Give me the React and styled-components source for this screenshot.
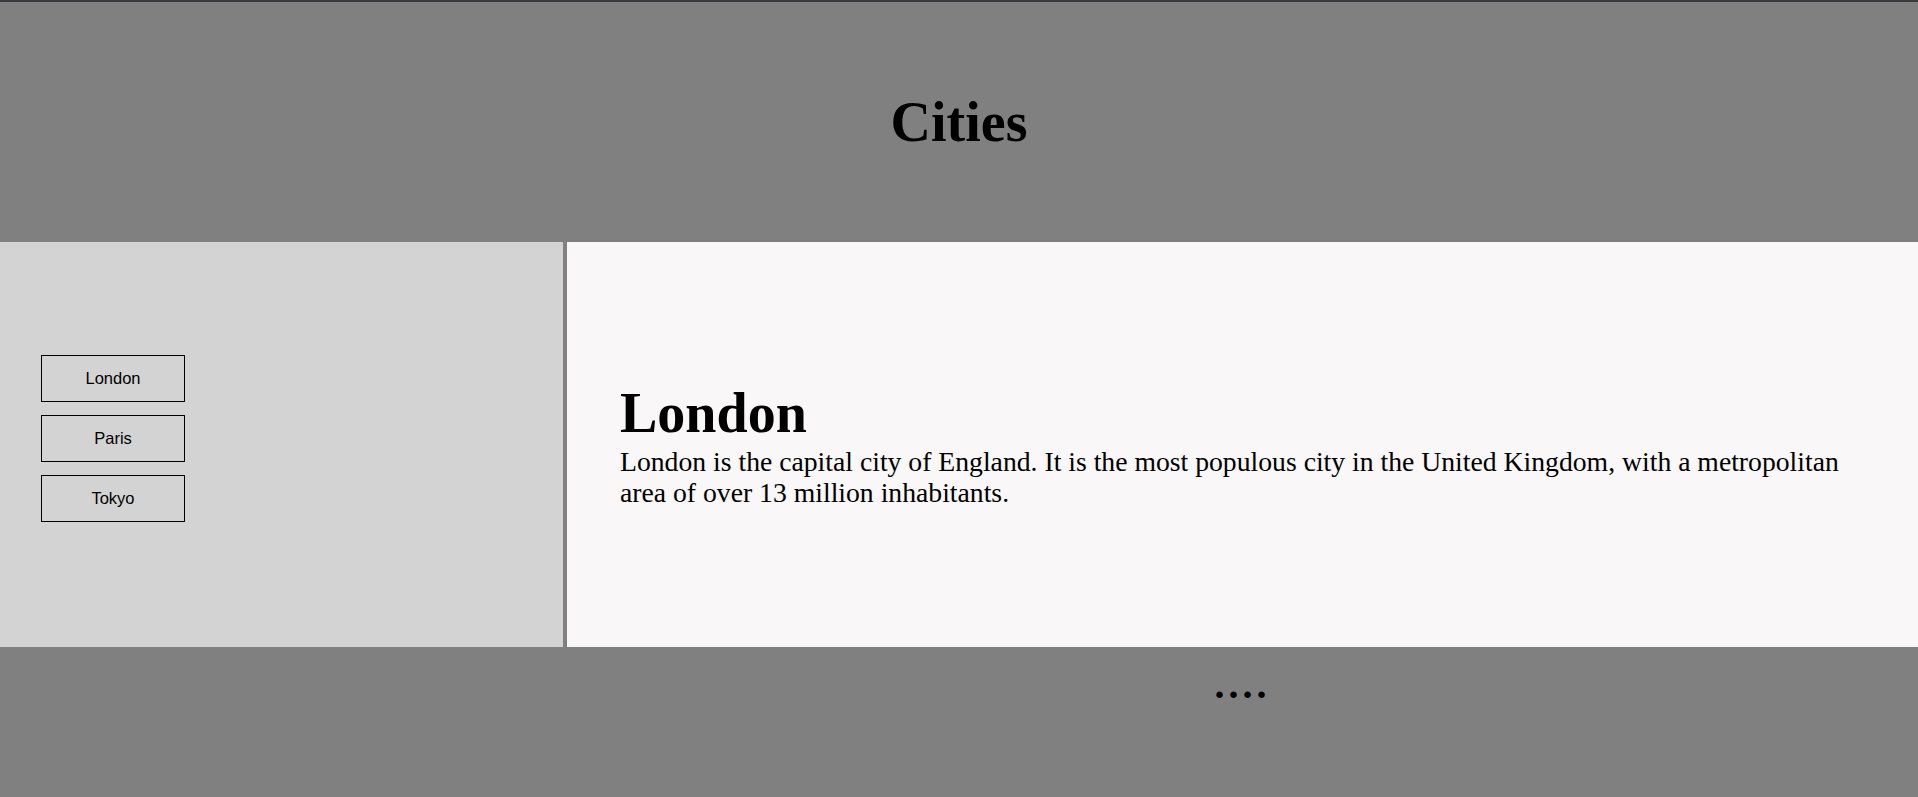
import styled, { createGlobalStyle } from "styled-components"

const GlobalStyle = createGlobalStyle`
    html, body {
        margin: 0;
        padding: 0;
        height: 100%;
        background: #808080;
    }
    body {
        font-family: "Liberation Serif", "Times New Roman", serif;
        border-top: 2px solid #3b3b3f;
        box-sizing: border-box;
    }
`

const Page = styled.div`
    display: grid;
    grid-template-columns: 563px 1fr;
    grid-template-rows: 240px 405px 150px;
    column-gap: 4px;
    background: #808080;
`

const Header = styled.header`
    grid-column: 1 / -1;
    display: flex;
    align-items: center;
    justify-content: center;
`

const Title = styled.h1`
    margin: 0;
    font-size: 56px;
    font-weight: bold;
    color: #000;
`

const Nav = styled.nav`
    background: #d3d3d3;
    display: flex;
    flex-direction: column;
    justify-content: center;
    gap: 13px;
    padding-left: 41px;
    padding-bottom: 12px;
`

const CityButton = styled.button`
    width: 144px;
    height: 47px;
    background: transparent;
    border: 1px solid #000;
    font-family: "Liberation Sans", Arial, sans-serif;
    font-size: 16.5px;
    color: #000;
    cursor: pointer;
`

const Content = styled.main`
    background: #f9f7f8;
    display: flex;
    flex-direction: column;
    justify-content: center;
    padding: 0 40px 0 53px;
`

const CityName = styled.h2`
    margin: 0;
    font-size: 56px;
    font-weight: bold;
    line-height: 1.15;
`

const Desc = styled.p`
    margin: 0;
    font-size: 27.7px;
    line-height: 31px;
`

const Footer = styled.footer`
    grid-column: 2;
    display: flex;
    justify-content: center;
    padding-top: 18px;
`

const Dots = styled.span`
    font-size: 40px;
    font-weight: bold;
    letter-spacing: 4px;
    line-height: 1;
`

const cities = ["London", "Paris", "Tokyo"]

const App = () => {
    return (
        <>
            <GlobalStyle />
            <Page>
                <Header>
                    <Title>Cities</Title>
                </Header>
                <Nav>
                    {cities.map(c => (
                        <CityButton key={c}>{c}</CityButton>
                    ))}
                </Nav>
                <Content>
                    <CityName>London</CityName>
                    <Desc>London is the capital city of England. It is the most populous city in the United Kingdom, with a metropolitan area of over 13 million inhabitants.</Desc>
                </Content>
                <Footer>
                    <Dots>....</Dots>
                </Footer>
            </Page>
        </>
    )
}

export default App
